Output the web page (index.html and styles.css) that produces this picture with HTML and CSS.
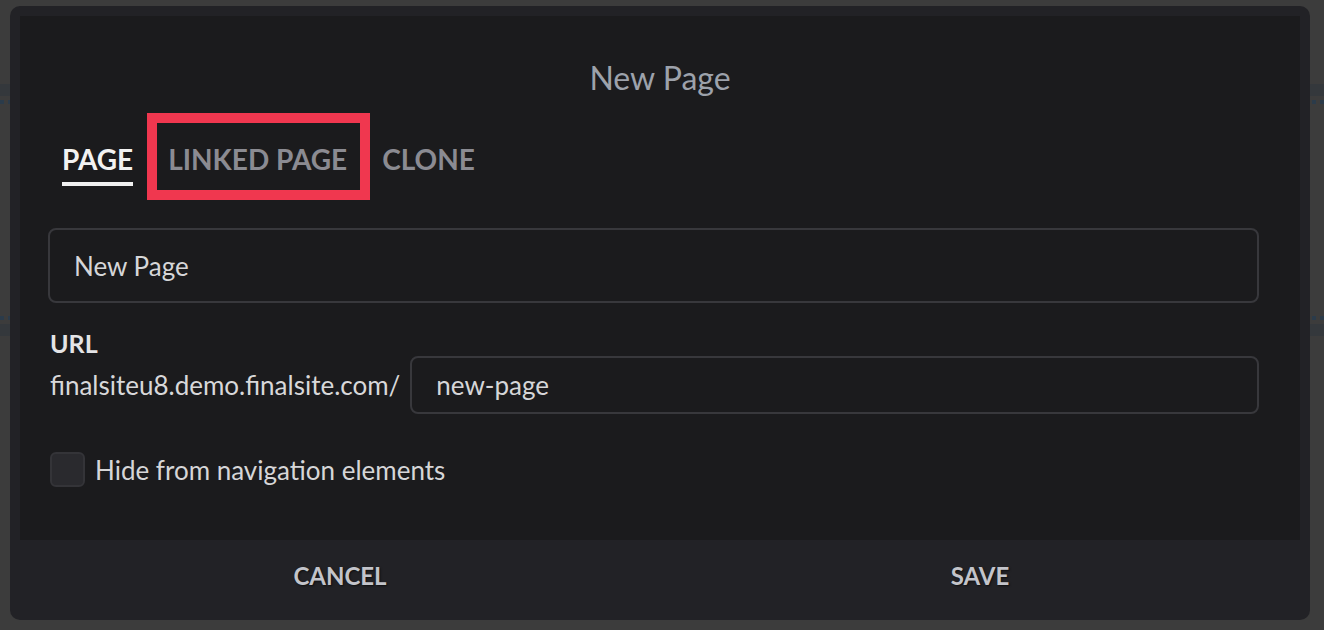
FILE: index.html
```html
<!DOCTYPE html>
<html lang="en">
<head>
<meta charset="utf-8">
<title>New Page</title>
<link rel="stylesheet" href="styles.css">
</head>
<body>
<div class="backdrop">
  <div class="bg-band"></div>
  <div class="bg-dash"></div>
  <div class="bg-spacer"></div>
  <div class="bg-dash"></div>
  <div class="bg-band"></div>
</div>
<div class="modal">
  <div class="modal-body">
    <h1 class="title">New Page</h1>
    <div class="tabs">
      <span class="tab active">PAGE</span>
      <span class="tab highlighted">LINKED PAGE</span>
      <span class="tab">CLONE</span>
    </div>
    <div class="field name-field">New Page</div>
    <div class="url-label">URL</div>
    <div class="url-row">
      <span class="url-prefix">finalsiteu8.demo.finalsite.com/</span>
      <div class="field slug-field">new-page</div>
    </div>
    <label class="check-row">
      <span class="checkbox"></span>
      <span class="check-label">Hide from navigation elements</span>
    </label>
  </div>
  <div class="modal-footer">
    <button class="footer-btn">CANCEL</button>
    <button class="footer-btn">SAVE</button>
  </div>
</div>
</body>
</html>
```
FILE: styles.css
```css
html, body {
  margin: 0;
  padding: 0;
}
body {
  width: 1324px;
  height: 630px;
  background: #3c3c3c;
  font-family: Lato, "Noto Sans", sans-serif;
  position: relative;
  overflow: hidden;
}
.backdrop {
  padding-top: 84px;
  display: flex;
  flex-direction: column;
}
.bg-band {
  height: 12px;
  background: #34383c;
}
.bg-dash {
  height: 4px;
  margin-top: 4px;
  margin-bottom: 4px;
  background: repeating-linear-gradient(90deg, #2b3b4a 0 4px, transparent 4px 8px);
}
.bg-spacer {
  height: 204px;
}
.modal {
  position: absolute;
  left: 10px;
  top: 6px;
  width: 1300px;
  height: 614px;
  background: #222226;
  border-radius: 10px;
  display: flex;
  flex-direction: column;
}
.modal-body {
  margin: 10px 10px 0 10px;
  height: 524px;
  background: #1b1b1d;
  padding: 42px 41px 0 28px;
  box-sizing: border-box;
  display: flex;
  flex-direction: column;
}
.title {
  margin: 0;
  font-size: 32px;
  line-height: 40px;
  font-weight: 400;
  color: #9da2ab;
  text-align: center;
  padding-left: 13px;
}
.tabs {
  margin-top: 44px;
  padding-left: 14px;
  display: flex;
  gap: 35px;
}
.tab {
  font-size: 28px;
  line-height: 34px;
  font-weight: 700;
  color: #8b8b92;
  padding-bottom: 6px;
  border-bottom: 4px solid transparent;
  position: relative;
}
.tab.active {
  color: #f2f2f2;
  border-bottom-color: #f0f0f0;
}
.tab.highlighted::after {
  content: "";
  position: absolute;
  left: -21px;
  right: -23px;
  top: -29px;
  bottom: -18px;
  border: 10px solid #f0374f;
}
.field {
  border: 2px solid #38383c;
  border-radius: 8px;
  box-sizing: border-box;
  color: #d6d6d8;
  font-size: 26px;
  display: flex;
  align-items: center;
}
.name-field {
  margin-top: 42px;
  height: 75px;
  padding-left: 24px;
}
.url-label {
  margin-top: 25px;
  font-size: 25px;
  line-height: 30px;
  font-weight: 700;
  color: #e4e4e6;
  padding-left: 2px;
}
.url-row {
  margin-top: -2px;
  display: flex;
  align-items: center;
  gap: 10px;
}
.url-prefix {
  font-size: 26px;
  color: #d8d8da;
  padding-left: 2px;
  white-space: nowrap;
}
.slug-field {
  flex: 1;
  height: 58px;
  padding-left: 24px;
}
.check-row {
  margin-top: 38px;
  display: flex;
  align-items: center;
  gap: 10px;
  padding-left: 2px;
}
.checkbox {
  width: 35px;
  height: 35px;
  box-sizing: border-box;
  background: #2a2a2e;
  border: 2px solid #343438;
  border-radius: 6px;
}
.check-label {
  font-size: 26px;
  color: #d6d6d8;
}
.modal-footer {
  flex: 1;
  display: flex;
  padding: 0 10px 9px;
}
.footer-btn {
  flex: 1;
  background: none;
  border: none;
  font-family: Lato, "Noto Sans", sans-serif;
  font-size: 24px;
  font-weight: 700;
  color: #c3c4ca;
  text-shadow: 1px 1px 2px rgba(0, 0, 0, 0.6);
  padding: 0;
}
```
